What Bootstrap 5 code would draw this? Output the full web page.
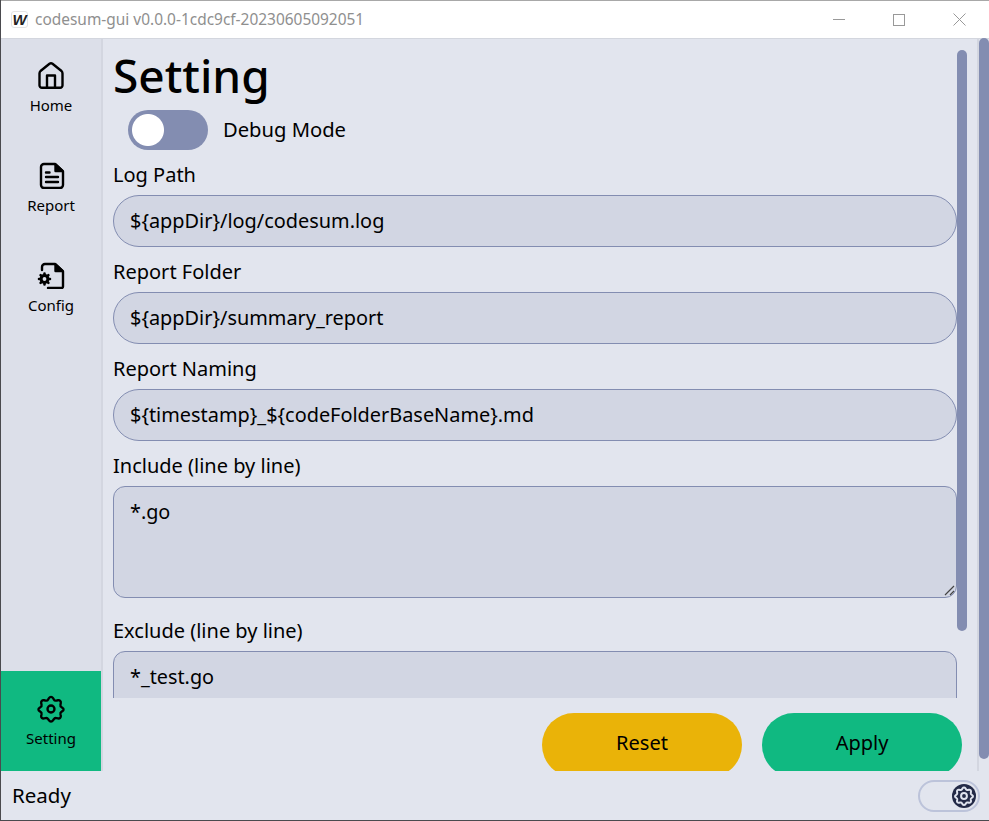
<!DOCTYPE html>
<html lang="en">
<head>
    <meta charset="UTF-8">
    <title>codesum-gui</title>
    <link rel="stylesheet" href="https://cdn.jsdelivr.net/npm/bootstrap@5.3.0/dist/css/bootstrap.min.css">
    <style>
        html, body { height: 100%; overflow: hidden; }
        body { font-family: "Noto Sans", "Liberation Sans", sans-serif; color: #000; background: #e2e5ee; }
        .app-window { height: 821px; border-left: 1px solid #4a4a4e; border-bottom: 1px solid #4a4a4e; position: relative; }
        .title-bar { height: 39px; background: #fff; border-top: 1px solid #a8a8a8; border-bottom: 1px solid #d3d6de; flex: none; }
        .app-logo { width: 17px; height: 17px; margin: 0 7px 0 10px; border: 1px solid #e4e4e4; border-radius: 3px; font: italic 700 15px/15px "Liberation Sans", sans-serif; text-align: center; color: #222; }
        .title-text { font-size: 15.45px; color: #8f8f8f; }
        .win-btn { width: 60px; height: 38px; }
        .win-btn svg { display: block; }
        .app-body { height: 732px; flex: none; }
        .side-nav { width: 100px; background: #dcdfe9; flex: none; }
        .nav-item-box { height: 100px; padding-top: 22px; font-size: 15px; line-height: 20px; text-align: center; color: #000; text-decoration: none; display: block; }
        .nav-item-box svg { display: block; margin: 0 auto 6px; }
        .nav-item-box.is-active { background: #10b981; padding-top: 24px; }
        .nav-item-box.is-active svg { margin-bottom: 5px; }
        .side-rule { width: 2px; background: #d3d6e0; flex: none; }
        .main-pane { width: 874px; position: relative; }
        .form-scroll { height: 659px; overflow: hidden; padding: 0 20px 0 10px; }
        .page-title { font-size: 46px; line-height: 72px; margin: 0; font-weight: 500; height: 71px; }
        .debug-row { height: 40px; padding-left: 15px; font-size: 20.2px; gap: 16px; margin-bottom: 10px; }
        .debug-row label { margin-bottom: 2px; margin-left: -1px; }
        .debug-row .form-check-input { width: 80px; height: 40px; margin: 0; border: 0; border-radius: 20px; background-color: #838db1; background-image: radial-gradient(circle at 20px 20px, #fff 15.5px, transparent 16.5px); background-size: auto; background-position: 0 0; }
        .field-label { display: block; font-size: 20px; line-height: 30px; height: 30px; margin: 0 0 5px; }
        .field-input.form-control { height: 52px; border-radius: 26px; background: #d2d6e3; border: 1px solid #838db1; font-size: 19.9px; padding: 0 16px 2px; margin-bottom: 10px; color: #000; }
        .field-area.form-control { height: 112px; border-radius: 12px; background: #d2d6e3; border: 1px solid #838db1; font-size: 19.8px; padding: 10px 16px; margin-bottom: 18px; color: #000; resize: none; }
        .area-wrap { position: relative; }
        .area-grip { position: absolute; right: 2px; top: 99px; display: block; }
        .action-row { height: 73px; padding: 15px 15px 0 0; gap: 20px; overflow: hidden; flex: none; }
        .pill-btn { width: 200px; height: 64px; border-radius: 32px; border: 0; font-size: 20px; color: #000; flex: none; padding-bottom: 10px; }
        .pill-reset { background: #eab308; }
        .pill-apply { background: #10b981; }
        .bar-inner { position: absolute; left: 854px; top: 11px; width: 10px; height: 581px; border-radius: 5px; background: #838db1; }
        .bar-outer { position: absolute; right: 0; top: 38px; width: 10px; height: 721px; border-radius: 6px; background: #838db1; }
        .bar-rule { position: absolute; left: 976px; top: 39px; width: 2px; height: 732px; background: #d3d6e0; }
        .status-bar { height: 49px; flex: none; padding: 0 9px 0 11px; font-size: 20.5px; }
        .theme-toggle { width: 62px; height: 32px; border: 2px solid #bcc3da; border-radius: 16px; padding-right: 2px; }
        .theme-knob { width: 24px; height: 24px; border-radius: 50%; background: #232a47; }
    </style>
</head>
<body>
    <svg width="0" height="0" class="d-block position-absolute">
        <defs>
            <path id="gearShape" d="M10.3 2.6a2 2 0 0 1 3.4 0l.7 1.2a2 2 0 0 0 2.2 1l1.4-.3a2 2 0 0 1 2.4 2.4l-.3 1.4a2 2 0 0 0 .9 2.1l1 .7a1.5 1.5 0 0 1 0 2.6l-1 .7a2 2 0 0 0-.9 2.1l.3 1.2a2 2 0 0 1-2.4 2.4l-1.4-.3a2 2 0 0 0-2.2 1l-.7 1a2 2 0 0 1-3.4 0l-.7-1a2 2 0 0 0-2.2-1l-1.4.3a2 2 0 0 1-2.4-2.4l.3-1.2a2 2 0 0 0-.9-2.1l-1-.7a1.5 1.5 0 0 1 0-2.6l1-.7a2 2 0 0 0 .9-2.1l-.3-1.4a2 2 0 0 1 2.4-2.4l1.4.3a2 2 0 0 0 2.2-1Z"/>
        </defs>
    </svg>
    <div class="app-window d-flex flex-column">
        <div class="title-bar d-flex align-items-center">
            <div class="app-logo">W</div>
            <div class="title-text flex-grow-1">codesum-gui v0.0.0-1cdc9cf-20230605092051</div>
            <div class="win-btn d-flex align-items-center justify-content-center"><svg width="12" height="12"><path d="M0 5.5H12" stroke="#999" fill="none"/></svg></div>
            <div class="win-btn d-flex align-items-center justify-content-center"><svg width="12" height="12"><rect x=".5" y=".5" width="11" height="11" stroke="#999" fill="none"/></svg></div>
            <div class="win-btn d-flex align-items-center justify-content-center"><svg width="13" height="13"><path d="M.5.5L12.5 12.5M12.5.5L.5 12.5" stroke="#999" fill="none"/></svg></div>
        </div>
        <div class="app-body d-flex">
            <nav class="side-nav d-flex flex-column">
                <a class="nav-item-box" href="#">
                    <svg width="28" height="28" viewBox="0 0 28 28" fill="none" stroke="#000" stroke-width="2.4" stroke-linejoin="round" stroke-linecap="round"><path d="M2.5 12.5Q2.5 11 3.5 10L12.5 2.8Q14 1.8 15.5 2.8L24.5 10Q25.5 11 25.5 12.5V24A2.5 2.5 0 0 1 23 26.8H5A2.5 2.5 0 0 1 2.5 24Z"/><path d="M10 26.5V14.5H18V26.5"/></svg>
                    Home
                </a>
                <a class="nav-item-box" href="#">
                    <svg width="28" height="28" viewBox="0 0 28 28" fill="none" stroke="#000" stroke-width="2.4" stroke-linejoin="round" stroke-linecap="round"><path d="M7 3H18L26 10.5V24A3 3 0 0 1 23 27H7A3 3 0 0 1 4 24V6A3 3 0 0 1 7 3Z"/><path d="M18.5 3.5V10H25.5Z" fill="#000"/><path d="M9 11.5H12.5M9 16H21M9 21H21"/></svg>
                    Report
                </a>
                <a class="nav-item-box" href="#">
                    <svg width="28" height="28" viewBox="0 0 28 28" fill="none" stroke="#000" stroke-width="2.4" stroke-linejoin="round" stroke-linecap="round"><path d="M5 9V6A3 3 0 0 1 8 3H18L26 10.5V25.5A1.5 1.5 0 0 1 24.5 27H11"/><path d="M18.5 3.5V10H25.5Z" fill="#000"/><circle cx="7.5" cy="18" r="3.4" stroke-width="3"/><path d="M7.5 12.5V14M7.5 22V23.5M2 18H3.5M11.5 18H13M3.6 14.1L4.6 15.1M10.4 20.9L11.4 21.9M3.6 21.9L4.6 20.9M10.4 15.1L11.4 14.1" stroke-width="2.6"/></svg>
                    Config
                </a>
                <div class="flex-grow-1"></div>
                <a class="nav-item-box is-active" href="#">
                    <svg width="28" height="28" viewBox="0 0 24 24" fill="none" stroke="#000" stroke-width="2" stroke-linejoin="round"><circle cx="12" cy="12" r="3"/><use href="#gearShape"/></svg>
                    Setting
                </a>
            </nav>
            <div class="side-rule"></div>
            <main class="main-pane d-flex flex-column">
                <div class="form-scroll">
                    <h1 class="page-title">Setting</h1>
                    <div class="debug-row d-flex align-items-center">
                        <input class="form-check-input" type="checkbox" role="switch" id="debugMode">
                        <label for="debugMode">Debug Mode</label>
                    </div>
                    <label class="field-label">Log Path</label>
                    <input class="form-control field-input" value="${appDir}/log/codesum.log">
                    <label class="field-label">Report Folder</label>
                    <input class="form-control field-input" value="${appDir}/summary_report">
                    <label class="field-label">Report Naming</label>
                    <input class="form-control field-input" value="${timestamp}_${codeFolderBaseName}.md">
                    <label class="field-label">Include (line by line)</label>
                    <div class="area-wrap">
                        <textarea class="form-control field-area">*.go</textarea>
                        <svg class="area-grip" width="11" height="11"><path d="M1 10L10 1M6 10L10 6" stroke="#444" stroke-width="1.2" fill="none"/></svg>
                    </div>
                    <label class="field-label">Exclude (line by line)</label>
                    <textarea class="form-control field-area">*_test.go</textarea>
                </div>
                <div class="action-row d-flex justify-content-end">
                    <button class="btn pill-btn pill-reset">Reset</button>
                    <button class="btn pill-btn pill-apply">Apply</button>
                </div>
                <div class="bar-inner"></div>
            </main>
        </div>
        <div class="status-bar d-flex align-items-center justify-content-between">
            <span>Ready</span>
            <div class="theme-toggle d-flex align-items-center justify-content-end">
                <div class="theme-knob d-flex align-items-center justify-content-center">
                    <svg width="20" height="20" viewBox="0 0 24 24" fill="none" stroke="#dfe3ee" stroke-width="2.4" stroke-linejoin="round"><circle cx="12" cy="12" r="3.5"/><use href="#gearShape"/></svg>
                </div>
            </div>
        </div>
        <div class="bar-rule"></div>
        <div class="bar-outer"></div>
    </div>
</body>
</html>
